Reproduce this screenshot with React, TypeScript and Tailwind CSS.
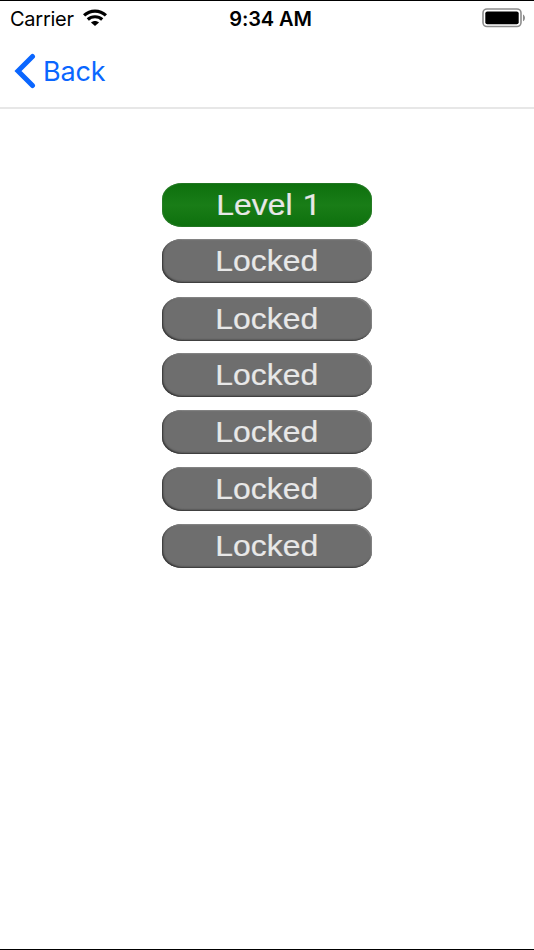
type Level = { id: number; name: string; number?: number; unlocked: boolean; gap: string };

const levels: Level[] = [
  { id: 1, name: "Level", number: 1, unlocked: true, gap: "mt-0" },
  { id: 2, name: "Locked", unlocked: false, gap: "mt-3" },
  { id: 3, name: "Locked", unlocked: false, gap: "mt-3.5" },
  { id: 4, name: "Locked", unlocked: false, gap: "mt-3" },
  { id: 5, name: "Locked", unlocked: false, gap: "mt-[13px]" },
  { id: 6, name: "Locked", unlocked: false, gap: "mt-[13px]" },
  { id: 7, name: "Locked", unlocked: false, gap: "mt-[13px]" },
];

function WifiIcon() {
  return (
    <svg width="24" height="18" viewBox="0 0 24 18" fill="none" stroke="black" strokeWidth="3.2">
      <path d="M1.1 6.4C7.2 .6 16.8 .6 22.9 6.4" />
      <path d="M4.8 10.5c4-3.7 10.4-3.7 14.4 0" />
      <path d="M8 13.4c2.4-2 5.6-2 8 0l-4 3.6z" fill="black" stroke="none" />
    </svg>
  );
}

function BatteryIcon() {
  return (
    <svg width="44" height="20" viewBox="0 0 44 20" fill="none">
      <rect x="1" y="1" width="38" height="17.5" rx="4" stroke="#8c8c8c" strokeWidth="1.6" />
      <rect x="3.3" y="3.4" width="33.4" height="12.8" rx="2" fill="black" />
      <path d="M41 6.4c2.6 1.2 2.6 5.6 0 6.8z" fill="#8c8c8c" />
    </svg>
  );
}

function StatusBar() {
  return (
    <div className="grid h-[34px] grid-cols-3 items-center text-[20px] leading-none text-black">
      <div className="flex items-center gap-[9px] pl-[10px]">
        <span className="w-[64px] pt-[2px] whitespace-nowrap tracking-[-0.25px]">Carrier</span>
        <WifiIcon />
      </div>
      <span className="pt-px pl-[7px] text-center font-semibold whitespace-nowrap tracking-[-0.1px]">9:34 AM</span>
      <div className="flex justify-end pr-[8px]">
        <BatteryIcon />
      </div>
    </div>
  );
}

function LevelButton({ level }: { level: Level }) {
  return (
    <button
      className={`flex h-11 w-[210px] shrink-0 items-center justify-center rounded-[20px/16px] ${level.gap} ${
        level.unlocked
          ? "bg-linear-to-b from-[#0d700d] via-[#197d17] to-[#0d700d] pl-[3px] shadow-[inset_0_0_1px_1px_#39803980]"
          : "bg-[#6e6e6e] shadow-[inset_1px_-1px_2px_#303030,inset_-1px_1px_1px_#8a8a8a]"
      }`}
    >
      <span className="scale-x-[1.1] font-['Liberation_Sans',sans-serif] text-[29px] leading-none whitespace-pre text-[#e8e8e8] [-webkit-text-stroke:0.2px_#e8e8e8]">
        {level.name}
        {level.number && <span className="ml-[2px] font-['Roboto',sans-serif]">{` ${level.number}`}</span>}
      </span>
    </button>
  );
}

export default function App() {
  return (
    <div className="flex h-[950px] w-[534px] flex-col overflow-hidden border-y border-black bg-white font-['Inter',sans-serif]">
      <StatusBar />
      <nav className="flex h-[74px] shrink-0 items-center border-b-2 border-[#e7e7e7] pl-[14px]">
        <button className="flex items-center gap-[7px] text-[#0a66ff]">
          <svg width="22" height="36" viewBox="0 0 22 36" fill="none" stroke="currentColor" strokeWidth="5" strokeLinecap="round">
            <path d="M18.5 3.5 4 18l14.5 14.5" />
          </svg>
          <span className="text-[27px] leading-none tracking-[-0.15px]">Back</span>
        </button>
      </nav>
      <main className="flex flex-col items-center pt-[74px]">
        {levels.map((level) => (
          <LevelButton key={level.id} level={level} />
        ))}
      </main>
    </div>
  );
}
